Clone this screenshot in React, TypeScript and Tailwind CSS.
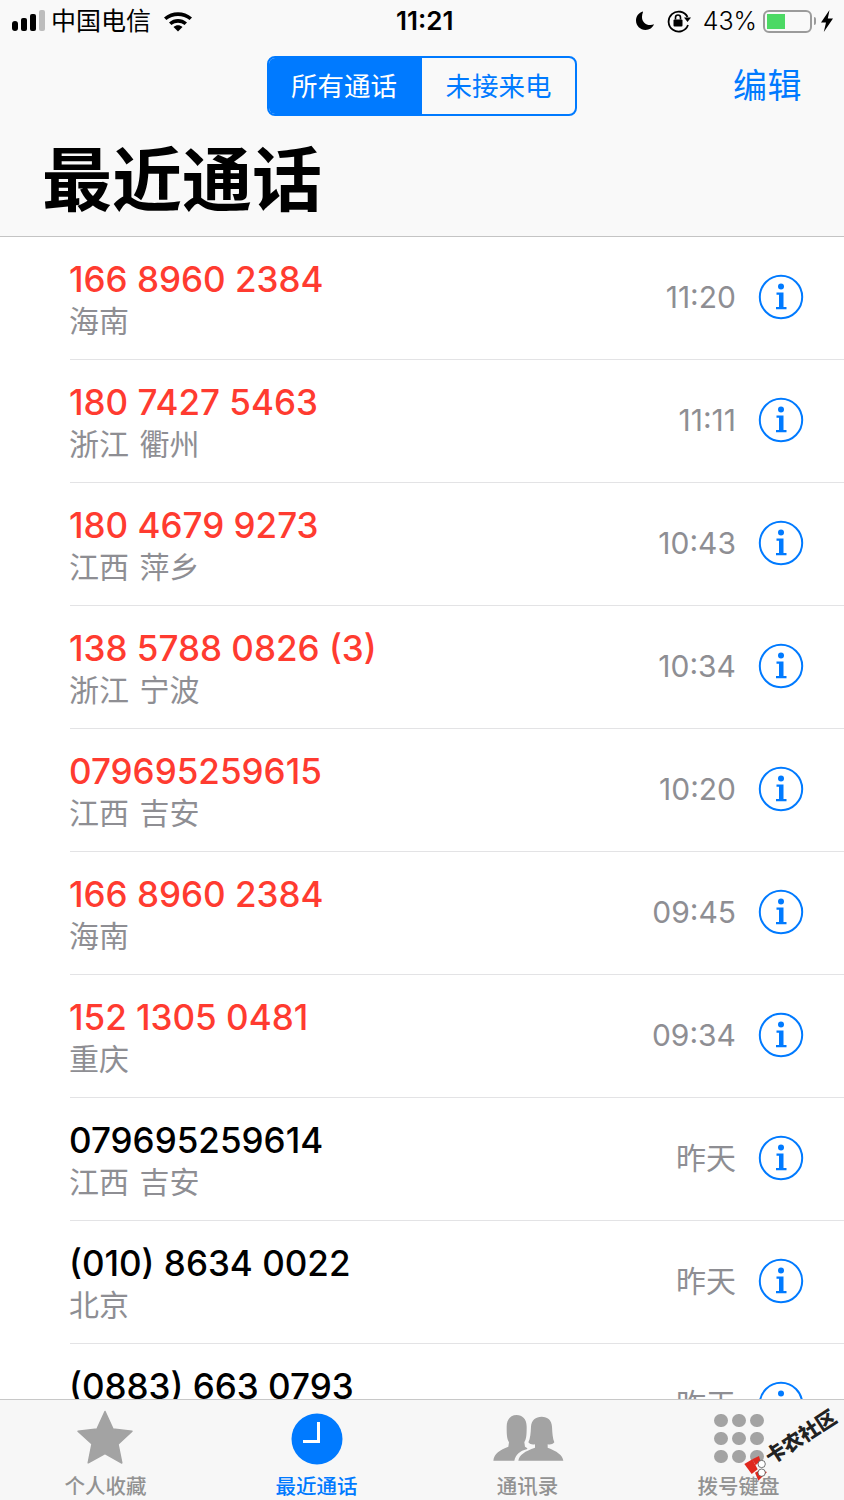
const calls = [
  { name: '166 8960 2384', place: '海南', time: '11:20', missed: true },
  { name: '180 7427 5463', place: '浙江 衢州', time: '11:11', missed: true },
  { name: '180 4679 9273', place: '江西 萍乡', time: '10:43', missed: true },
  { name: '138 5788 0826 (3)', place: '浙江 宁波', time: '10:34', missed: true },
  { name: '079695259615', place: '江西 吉安', time: '10:20', missed: true },
  { name: '166 8960 2384', place: '海南', time: '09:45', missed: true },
  { name: '152 1305 0481', place: '重庆', time: '09:34', missed: true },
  { name: '079695259614', place: '江西 吉安', time: '昨天', missed: false },
  { name: '(010) 8634 0022', place: '北京', time: '昨天', missed: false },
  { name: '(0883) 663 0793', place: '云南 临沧', time: '昨天', missed: false },
];

const fontClass = "font-['Inter','Noto_Sans_CJK_SC',sans-serif]";

function InfoIcon() {
  return (
    <svg width="46" height="46" viewBox="0 0 46 46" className="shrink-0 mb-[2px]">
      <circle cx="23" cy="23" r="21.2" fill="none" stroke="#007aff" strokeWidth="2" />
      <circle cx="23" cy="12.5" r="3" fill="#007aff" />
      <path d="M18.5 18.5h7v14.5h3v2.2h-10.500V33h3V20.700h-2.500z" fill="#007aff" />
    </svg>
  );
}

function StatusBar() {
  return (
    <div className="h-[42px] flex items-center justify-between pl-3 pr-2.5 relative">
      <div className="flex items-center">
        <div className="flex items-end gap-[3px] w-[33px] mb-[1px]">
          <div className="w-[6px] h-[10px] shrink-0 rounded-[3px] bg-black" />
          <div className="w-[6px] h-[13px] shrink-0 rounded-[2px] bg-black" />
          <div className="w-[6px] h-[17px] shrink-0 rounded-[2px] bg-black" />
          <div className="w-[6px] h-[21px] shrink-0 rounded-[2px] bg-[#bdbdbd]" />
        </div>
        <span className="ml-[7px] text-[25px] leading-none text-black -translate-x-[1px]">中国电信</span>
        <svg width="30" height="22" viewBox="0 0 30 22" className="ml-[12px] -translate-x-[1px]">
          <path d="M1 7.500C9 .5 21 .5 29 7.500l-2.400 2.600C19.800 4.500 10.200 4.500 3.400 10.100z" fill="#000" />
          <path d="M6 12.500c5.500-4.600 12.500-4.600 18 0l-2.500 2.600c-4-3.200-9-3.200-13 0z" fill="#000" />
          <path d="M10.500 17c2.800-2.200 6.200-2.200 9 0L15 21.500z" fill="#000" />
        </svg>
      </div>
      <span className="absolute left-[396px] top-[6px] text-[26px] leading-[30px] font-semibold text-black">11:21</span>
      <div className="flex items-center">
        <svg width="20" height="22" viewBox="0 0 20 22">
          <path d="M8 1.500C3.800 2.600 1 6.200 1 10.500c0 5.200 4.200 9.500 9.500 9.500 3.900 0 7.200-2.300 8.500-5.700-1 .5-2.400.8-3.700.8-4.900 0-8.300-3.500-8.300-8.100 0-1.900.3-3.400 1-5z" fill="#000" />
        </svg>
        <svg width="26" height="24" viewBox="0 0 26 24" className="ml-[11px]">
          <path d="M21.500 8A10 10 0 1 0 22 16" fill="none" stroke="#000" strokeWidth="1.800" />
          <path d="M18 8.500h7L21.500 13z" fill="#000" />
          <rect x="7.500" y="10.500" width="9" height="7" rx="1" fill="#000" />
          <path d="M9.500 10.500V8.500a2.500 2.500 0 0 1 5 0v2" fill="none" stroke="#000" strokeWidth="1.600" />
        </svg>
        <span className="ml-[11px] text-[25px] leading-none text-black font-light">43%</span>
        <div className="ml-[6px] w-[49px] h-[23px] rounded-[6px] border-2 border-[#9b9b9b] p-[2px]">
          <div className="w-[18px] h-full bg-[#4cd964]" />
        </div>
        <div className="ml-[2px] w-[2px] h-[8px] rounded-r-full bg-[#9b9b9b]" />
        <svg width="14" height="24" viewBox="0 0 14 24" className="ml-[4px]">
          <path d="M9.500 1 1 13.500h5L3.800 23 13 9.500H7.800z" fill="#000" />
        </svg>
      </div>
    </div>
  );
}

function Header() {
  return (
    <div className="bg-[#f9f9f9] border-b border-[#c4c4c4] h-[237px] shrink-0">
      <StatusBar />
      <div className="mt-[14px] h-[60px] relative flex justify-center">
        <div className="flex w-[310px] h-[60px] rounded-[8px] border-2 border-[#007aff] overflow-hidden">
          <div className="w-[153px] bg-[#007aff] text-white text-[26.500px] flex items-center justify-center pt-[2px] pr-[3px]">所有通话</div>
          <div className="flex-1 text-[#007aff] text-[26.500px] flex items-center justify-center pt-[2px]">未接来电</div>
        </div>
        <span className="absolute right-[42px] top-[6px] text-[34px] leading-[48px] tracking-[0.5px] text-[#007aff]">编辑</span>
      </div>
      <h1 className="mt-[27px] pl-[42px] text-[70px] leading-[76px] font-bold text-black">最近通话</h1>
    </div>
  );
}

function CallRow({ call }: { call: (typeof calls)[number] }) {
  return (
    <div className="pl-[70px] shrink-0">
      <div className="h-[123px] border-b border-[#e3e3e5] flex items-center pr-[40px]">
        <div className="flex-1 min-w-0 pt-[4px] -ml-[1px]">
          <div className={`text-[35px] leading-[42px] font-medium whitespace-nowrap ${call.missed ? 'text-[#ff3b30]' : 'text-black'}`}>
            {call.name}
          </div>
          <div className="text-[30px] leading-[42px] text-[#8e8e93] whitespace-pre [word-spacing:2px]">{call.place}</div>
        </div>
        <span className="text-[30px] leading-none text-[#8e8e93] mr-[22px] mb-[2px]">{call.time}</span>
        <InfoIcon />
      </div>
    </div>
  );
}

function Watermark() {
  return (
    <>
      <svg width="109" height="90" viewBox="0 0 327 270" className="absolute left-[735px] top-[1400px]">
        <path d="M28 192 52 178 68 208 50 222z" fill="#e0281e" />
        <path d="M52 178 72 168 76 182 62 196z" fill="#e0281e" />
        <path d="M60 218 75 210 96 216 70 242z" fill="#e0281e" />
        <circle cx="80" cy="192" r="11" fill="#fff" stroke="#333" strokeWidth="2" />
        <circle cx="80" cy="218" r="11" fill="#fff" stroke="#333" strokeWidth="2" />
      </svg>
      <span className="absolute left-[751px] top-[1427px] w-[100px] text-center -rotate-[33deg] text-[20px] leading-[20px] font-black text-[#222] whitespace-nowrap">卡农社区</span>
    </>
  );
}

function TabBar() {
  return (
    <div className="h-[101px] shrink-0 bg-[#f7f7f7] border-t border-[#c8c8c8] grid grid-cols-4 relative">
      <div className="flex flex-col items-center">
        <svg width="58" height="54" viewBox="0 0 58 54" className="mt-[10px] -translate-x-[1px]">
          <path d="M29 1.500l8 17.500 19 2.200-14 13 3.800 18.800L29 43.500 12.200 52.800 16 34 2 21.200 21 19z" fill="#a3a3a3" stroke="#a3a3a3" strokeWidth="1.500" strokeLinejoin="round" />
        </svg>
        <span className="mt-[9px] text-[20.500px] leading-[28px] font-medium text-[#929292]">个人收藏</span>
      </div>
      <div className="flex flex-col items-center">
        <svg width="52" height="52" viewBox="0 0 52 52" className="mt-[13px]">
          <circle cx="26" cy="26" r="25.500" fill="#007aff" />
          <path d="M27.500 9v19.500H12" fill="none" stroke="#fff" strokeWidth="3" />
        </svg>
        <span className="mt-[8px] text-[20.500px] leading-[28px] font-medium text-[#007aff]">最近通话</span>
      </div>
      <div className="flex flex-col items-center">
        <svg width="85" height="60" viewBox="0 0 255 180" className="mt-[5px]">
          <path d="M25 167C27 145 45 135 70 125L72 112C65 100 65 85 65 65 65 42 78 30 95 30 112 30 125 42 125 65 125 85 125 100 118 112L120 125C125 128 130 130 125 133 105 137 92 150 88 167Z" fill="#a3a3a3" />
          <path d="M100 167C102 150 120 138 150 128L150 118C142 120 135 118 130 112 136 100 137 85 138 65 139 45 152 35 170 35 188 35 200 45 201 65 202 85 203 100 208 112 203 118 196 120 188 118L188 128C215 138 233 150 235 167Z" fill="#a3a3a3" />
        </svg>
        <span className="mt-[8px] text-[20.500px] leading-[28px] font-medium text-[#929292]">通讯录</span>
      </div>
      <div className="flex flex-col items-center">
        <div className="mt-[14px] grid grid-cols-3 gap-x-[4px] gap-y-[5px]">
          {Array.from({ length: 9 }).map((_, i) => (
            <div key={i} className="w-[14px] h-[13px] rounded-full bg-[#a3a3a3]" />
          ))}
        </div>
        <span className="mt-[10px] text-[20.500px] leading-[28px] font-medium text-[#929292]">拨号键盘</span>
      </div>
    </div>
  );
}

export default function App() {
  return (
    <div className={`relative w-[844px] h-[1500px] overflow-hidden bg-white flex flex-col ${fontClass}`}>
      <Header />
      <div className="flex-1 min-h-0 overflow-hidden">
        {calls.map((call, i) => (
          <CallRow key={i} call={call} />
        ))}
      </div>
      <TabBar />
      <Watermark />
    </div>
  );
}
